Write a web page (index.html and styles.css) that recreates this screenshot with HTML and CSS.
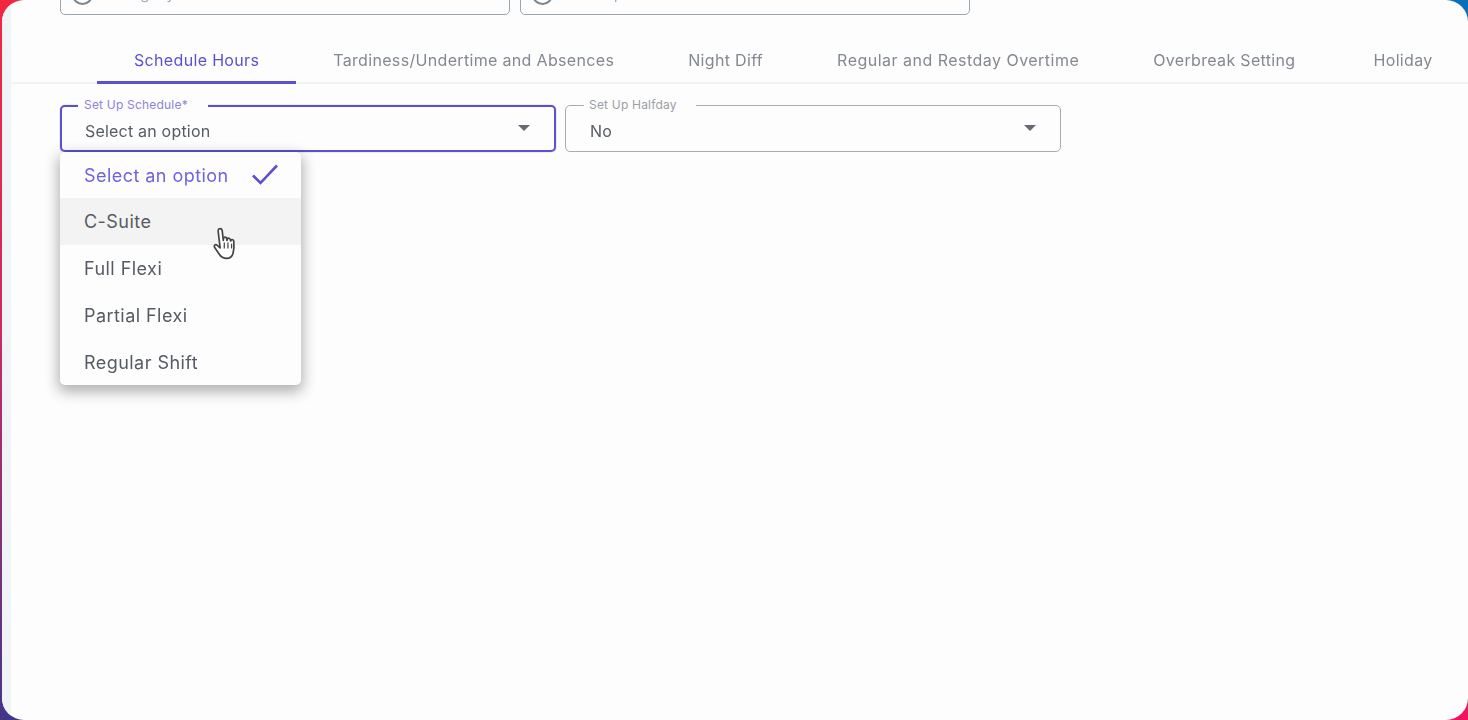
FILE: index.html
```html
<!DOCTYPE html>
<html lang="en">
<head>
<meta charset="utf-8">
<title>Schedule Hours</title>
<link rel="stylesheet" href="styles.css">
</head>
<body>
<div class="panel">
  <div class="strip"></div>
  <main class="content">
    <div class="top-fields">
      <div class="top-field"><span class="ring"></span><span class="hint">Category Name</span></div>
      <div class="top-field"><span class="ring"></span><span class="hint">Description</span></div>
    </div>
    <nav class="tabs">
      <a class="tab active">Schedule Hours</a>
      <a class="tab">Tardiness/Undertime and Absences</a>
      <a class="tab">Night Diff</a>
      <a class="tab tab-wide">Regular and Restday Overtime</a>
      <a class="tab tab-gap">Overbreak Setting</a>
      <a class="tab">Holiday</a>
    </nav>
    <div class="selects">
      <div class="select focused">
        <span class="legend">Set Up Schedule*</span>
        <span class="value">Select an option</span>
        <span class="caret"></span>
        <ul class="menu">
          <li class="opt selected">Select an option
            <svg class="check" width="30" height="24" viewBox="0 0 30 24"><path d="M3 13.500l7.500 7.500L27 3.500" fill="none" stroke="#5b50cf" stroke-width="2.600"/></svg>
          </li>
          <li class="opt hover">C-Suite</li>
          <li class="opt">Full Flexi</li>
          <li class="opt">Partial Flexi</li>
          <li class="opt">Regular Shift</li>
        </ul>
        <svg class="cursor" width="27" height="39" viewBox="0 0 22 32"><path d="M5.500 2.500c1.300-.8 2.600 0 2.800 1.300l.9 8 .2-1.700c.3-1.300 2.200-1.300 2.500 0l.3 1.700.3-1c.4-1.100 2.100-1 2.400.2l.3 1.300.4-.6c.6-.9 2.100-.4 2.200.8.300 3.500.2 7-.6 9.800-.7 2.700-2.400 4.200-5.200 4.200-3 0-4.700-1-6.100-3.300L2 17.500c-.8-1.300.6-2.800 2-1.800l2.600 2.300L5 4.500c-.1-.8 0-1.600.5-2z" fill="#fff" stroke="#444" stroke-width="1.400" stroke-linejoin="round"/><path d="M10 13.500v5M13 13.500v5M16 14.500v4" stroke="#444" stroke-width="1" fill="none"/></svg>
      </div>
      <div class="select">
        <span class="legend">Set Up Halfday</span>
        <span class="value">No</span>
        <span class="caret"></span>
      </div>
    </div>
  </main>
</div>
</body>
</html>
```
FILE: styles.css
```css
* { box-sizing: border-box; }
html, body { margin: 0; height: 100%; }
body {
  width: 1468px;
  height: 720px;
  overflow: hidden;
  font-family: "Inter", "Liberation Sans", sans-serif;
  background:
    radial-gradient(circle at 100% 0, #0a6fb8 0 60px, transparent 61px),
    radial-gradient(circle at 100% 100%, #f0145f 0 80px, transparent 81px),
    linear-gradient(180deg, #f3263f 0%, #d02a62 45%, #43358a 100%);
}
.panel {
  display: flex;
  height: 720px;
  margin-left: 2px;
  background: #fdfdfe;
  border-radius: 22px;
  overflow: hidden;
}
.strip { width: 9px; flex: none; background: #f1f4f6; }
.content { flex: 1; min-width: 0; padding-left: 49px; filter: blur(.45px); }
.top-fields {
  display: flex;
  gap: 10px;
  height: 15px;
  align-items: flex-end;
  overflow: hidden;
}
.top-field {
  flex: none;
  width: 450px;
  height: 50px;
  display: flex;
  align-items: flex-end;
  gap: 11px;
  padding: 0 11px 11px;
  border: 1px solid #9aa5ad;
  border-radius: 5px;
  color: #a9adb3;
  font-size: 16px;
  letter-spacing: .2px;
  line-height: 18px;
}
.ring {
  width: 21px;
  height: 21px;
  margin-bottom: -2px;
  flex: none;
  border: 2px solid #7d858c;
  border-radius: 50%;
}
.hint { transform: translateY(-1px); }
.tabs {
  display: flex;
  margin-top: 28px;
  height: 41px;
  margin-left: -49px;
  padding-left: 86px;
  box-shadow: inset 0 -2px 0 #f1f2f3;
  overflow: hidden;
}
.tab {
  flex: none;
  height: 41px;
  padding: 6px 37px 0;
  color: #84888f;
  font-size: 16px;
  letter-spacing: .33px;
  line-height: 22px;
  white-space: nowrap;
}
.tab-wide { letter-spacing: .48px; }
.tab-gap { padding-right: 41px; }
.tab.active {
  color: #5b50cf;
  box-shadow: inset 0 -3px 0 #5b50cf;
}
.selects { display: flex; gap: 9px; margin-top: 21px; }
.select {
  position: relative;
  flex: none;
  width: 496px;
  height: 47px;
  padding: 13px 24px 0;
  border: 1px solid #a5acb3;
  border-radius: 5px;
  color: #565b63;
  font-size: 16px;
  letter-spacing: .2px;
  line-height: 24px;
}
.select.focused {
  border: 2px solid #5b50cf;
  padding: 12px 23px 0;
  box-shadow: 0 0 1px #5b50cf;
}
.legend {
  position: absolute;
  left: 18px;
  top: -9px;
  padding: 0 19px 0 5px;
  background: #fdfdfe;
  color: #9c9ea4;
  font-size: 12px;
  line-height: 16px;
}
.focused .legend { left: 16px; top: -10px; padding: 0 20px 0 6px; color: #8b84dc; }
.caret {
  position: absolute;
  right: 24px;
  top: 19px;
  border-left: 6px solid transparent;
  border-right: 6px solid transparent;
  border-top: 6px solid #666b72;
}
.focused .caret { right: 24px; top: 18px; }
.menu {
  position: absolute;
  left: -2px;
  top: 45px;
  width: 241px;
  margin: 0;
  padding: 0;
  list-style: none;
  background: #fdfdfe;
  border-radius: 5px;
  box-shadow: 0 5px 14px 2px rgba(0,0,0,.3);
  z-index: 2;
}
.opt {
  position: relative;
  height: 47px;
  padding: 12px 24px 0;
  font-size: 18px;
  letter-spacing: .45px;
  line-height: 24px;
  color: #565b63;
  white-space: nowrap;
}
.opt:last-child { height: 46px; }
.opt.selected { height: 46px; color: #6f63dc; }
.opt.hover { background: #f3f3f3; }
.check { position: absolute; left: 190px; top: 10px; }
.cursor { position: absolute; left: 150px; top: 119px; z-index: 3; }
```
